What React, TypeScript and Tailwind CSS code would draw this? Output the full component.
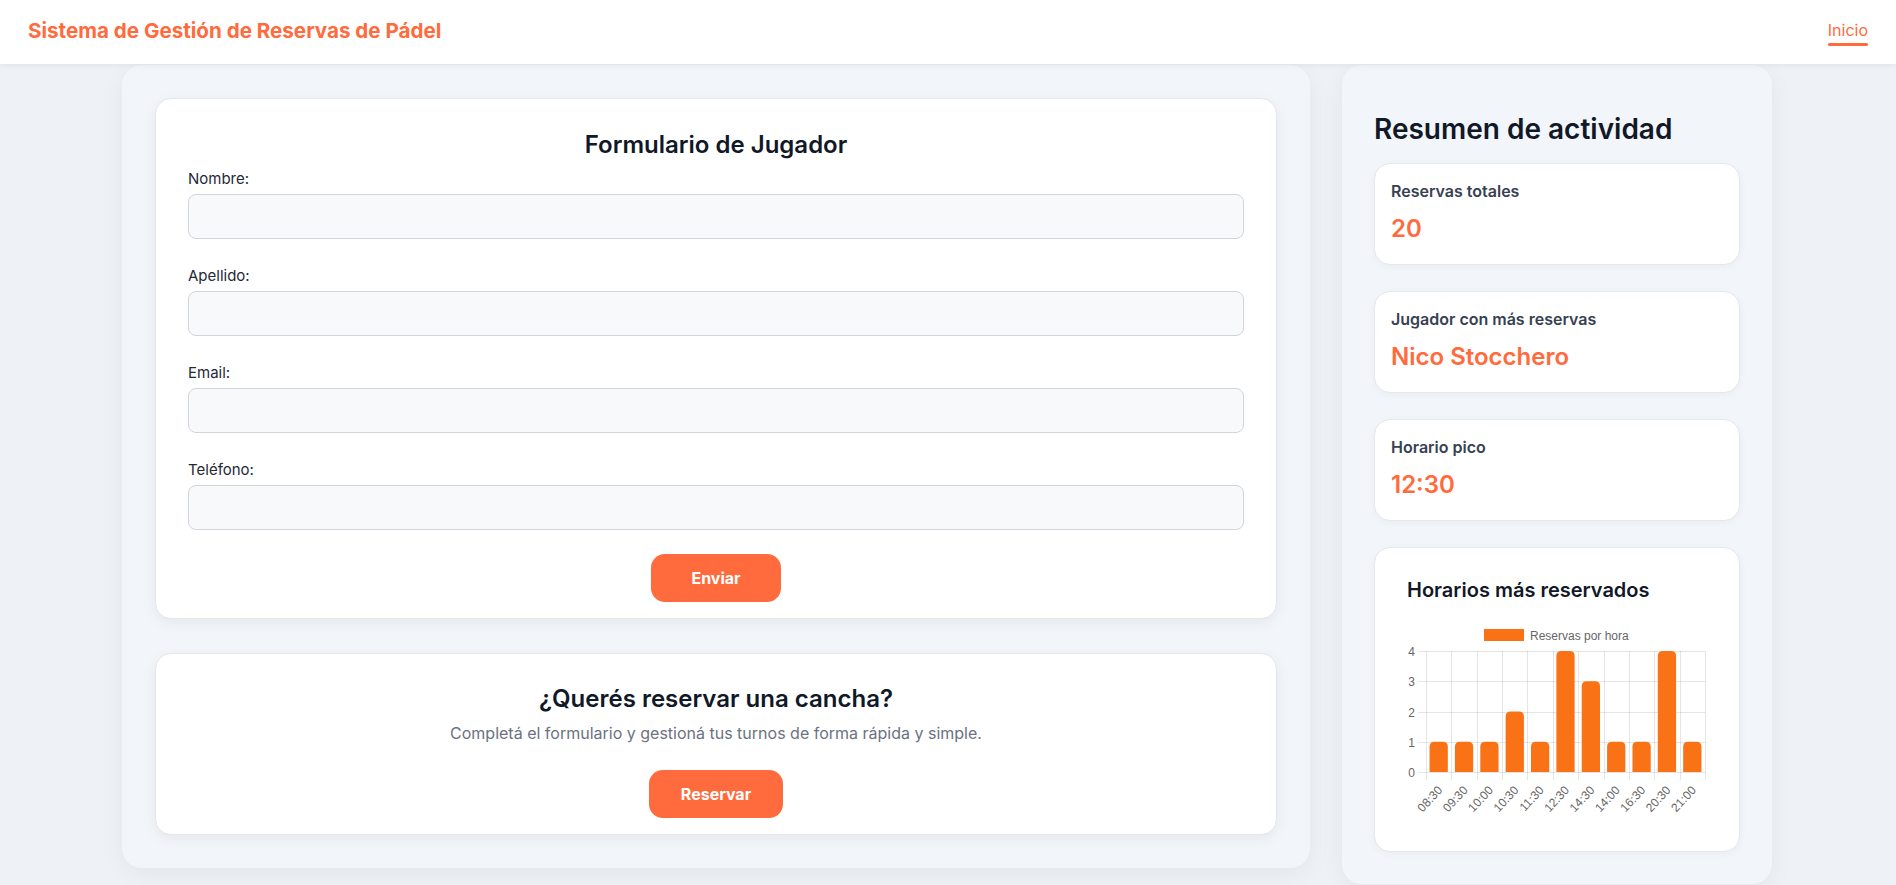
import React from 'react';

const horas = ['08:30', '09:30', '10:00', '10:30', '11:30', '12:30', '14:30', '14:00', '16:30', '20:30', '21:00'];
const reservas = [1, 1, 1, 2, 1, 4, 3, 1, 1, 4, 1];

const stats = [
  { label: 'Reservas totales', value: '20' },
  { label: 'Jugador con más reservas', value: 'Nico Stocchero' },
  { label: 'Horario pico', value: '12:30' }
];

const campos = ['Nombre:', 'Apellido:', 'Email:', 'Teléfono:'];

const BarChart: React.FC = () => {
  const left = 19;
  const right = 298;
  const top = 32;
  const bottom = 153;
  const catW = (right - left) / horas.length;
  const unit = (bottom - top) / 4;
  const barW = catW * 0.72;
  const r = 5;
  const grid = 'rgba(0,0,0,0.1)';
  const font = "'Liberation Sans', Arial, sans-serif";

  return (
    <svg width={300} height={200} className="mt-[15px] block">
      {/* legend */}
      <rect x={77} y={10} width={40} height={12} fill="#f97316" />
      <text x={123} y={16.5} fontSize={12} fill="#666" fontFamily={font} dominantBaseline="central">
        Reservas por hora
      </text>

      {/* horizontal grid */}
      {[0, 1, 2, 3, 4].map((k) => {
        const y = Math.round(top + unit * k) + 0.5;
        return (
          <g key={k}>
            <line x1={left - 8} x2={right} y1={y} y2={y} stroke={grid} />
            <text x={8} y={y} fontSize={12} fill="#666" fontFamily={font} textAnchor="end" dominantBaseline="central">
              {4 - k}
            </text>
          </g>
        );
      })}

      {/* vertical grid */}
      {Array.from({ length: horas.length + 1 }).map((_, i) => {
        const x = Math.round(left + catW * i) + 0.5;
        return <line key={i} x1={x} x2={x} y1={top} y2={bottom + 8} stroke={grid} />;
      })}

      {/* bars */}
      {reservas.map((v, i) => {
        const cx = left + catW * (i + 0.5);
        const x = cx - barW / 2;
        const yTop = bottom - unit * v;
        const d = `M${x},${bottom} L${x},${yTop + r} Q${x},${yTop} ${x + r},${yTop} L${x + barW - r},${yTop} Q${x + barW},${yTop} ${x + barW},${yTop + r} L${x + barW},${bottom} Z`;
        return <path key={i} d={d} fill="#f97316" />;
      })}

      {/* x labels */}
      {horas.map((h, i) => {
        const cx = left + catW * (i + 0.5) + 1.5;
        const y = 169;
        return (
          <text
            key={h}
            x={cx}
            y={y}
            fontSize={12}
            fill="#666"
            fontFamily={font}
            textAnchor="end"
            dominantBaseline="central"
            transform={`rotate(-47 ${cx} ${y})`}
          >
            {h}
          </text>
        );
      })}
    </svg>
  );
};

export default function App() {
  return (
    <div className="min-h-screen bg-[#eef1f5] font-['Inter',sans-serif]">
      <header className="h-16 bg-white shadow-[0_2px_6px_rgba(0,0,0,0.05)] flex items-center justify-between px-7 relative z-10">
        <h1 className="text-[20.6px] font-bold text-[#ff6b3d] -mt-[2px]">Sistema de Gestión de Reservas de Pádel</h1>
        <div className="flex flex-col">
          <span className="text-base leading-6 text-[#ff6b3d]">Inicio</span>
          <div className="h-[3px] mt-px rounded-full bg-[#ff6b3d]" />
        </div>
      </header>

      <main className="flex items-start gap-8 pt-px pl-[122px]">
        {/* left column */}
        <section className="w-[1188px] rounded-[20px] bg-[#f2f5f9] shadow-[0_6px_24px_rgba(0,0,0,0.05)] px-[33px] pt-[33px] pb-[33px]">
          <div className="rounded-2xl border border-[#e5e7eb] bg-white shadow-[0_4px_14px_rgba(0,0,0,0.06)] px-8 pt-[30px] pb-4">
            <h2 className="text-center text-2xl leading-8 font-semibold text-[#111827] mb-[7px]">Formulario de Jugador</h2>
            {campos.map((c, i) => (
              <div key={c} className={i === campos.length - 1 ? 'mb-6' : 'mb-[26px]'}>
                <label className="block text-[15px] leading-[22px] text-[#1f2937] mb-1">{c}</label>
                <input className="block w-full h-[45px] rounded-lg border border-[#d1d5db] bg-[#f8f9fb] px-3 outline-none" />
              </div>
            ))}
            <div className="flex justify-center">
              <button className="h-12 px-10 rounded-[14px] bg-[#ff6b3d] text-white text-base font-bold">Enviar</button>
            </div>
          </div>

          <div className="mt-[34px] rounded-2xl border border-[#e5e7eb] bg-white shadow-[0_4px_14px_rgba(0,0,0,0.06)] px-8 pt-[29px] pb-4 flex flex-col items-center">
            <h2 className="text-2xl leading-8 font-semibold text-[#111827]">¿Querés reservar una cancha?</h2>
            <p className="mt-1.5 text-base leading-6 text-[#6b7280]">
              Completá el formulario y gestioná tus turnos de forma rápida y simple.
            </p>
            <button className="mt-[25px] h-12 px-8 rounded-[14px] bg-[#ff6b3d] text-white text-base font-bold">Reservar</button>
          </div>
        </section>

        {/* right column */}
        <aside className="w-[430px] rounded-[20px] bg-[#f2f5f9] shadow-[0_6px_24px_rgba(0,0,0,0.05)] px-8 pt-[47px] pb-8">
          <h2 className="text-[28px] leading-[35px] font-semibold text-[#111827] mb-4">Resumen de actividad</h2>
          <div className="flex flex-col gap-[26px]">
            {stats.map((s) => (
              <div key={s.label} className="rounded-2xl border border-[#e5e7eb] bg-white shadow-[0_2px_8px_rgba(0,0,0,0.04)] px-4 pt-4 pb-[19px]">
                <p className="text-base leading-[22px] font-semibold text-[#374151] mb-[11px]">{s.label}</p>
                <p className="text-2xl leading-8 font-semibold text-[#ff6b3d]">{s.value}</p>
              </div>
            ))}
            <div className="rounded-2xl border border-[#e5e7eb] bg-white shadow-[0_2px_8px_rgba(0,0,0,0.04)] px-8 pt-[28px] pb-8">
              <h3 className="text-xl leading-7 font-semibold text-[#111827]">Horarios más reservados</h3>
              <BarChart />
            </div>
          </div>
        </aside>
      </main>
    </div>
  );
}
